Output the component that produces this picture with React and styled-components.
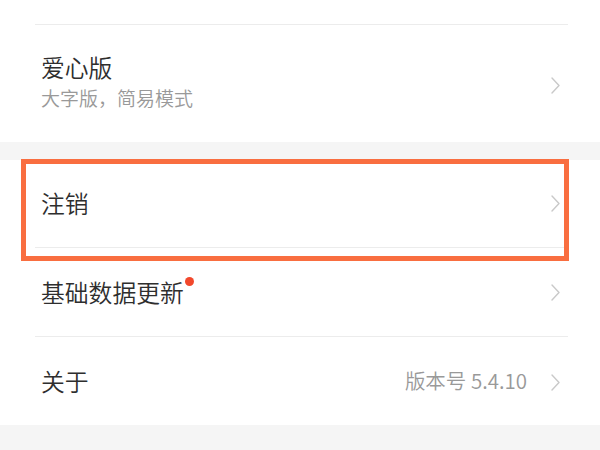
import React from "react";
import styled, { createGlobalStyle } from "styled-components";

const Global = createGlobalStyle`
  html, body { margin: 0; padding: 0; }
  body {
    background: #f5f5f5;
    font-family: "Noto Sans CJK SC", "Noto Sans", sans-serif;
    -webkit-font-smoothing: antialiased;
  }
`;

const Page = styled.div`
  position: relative;
  width: 600px;
  height: 450px;
  overflow: hidden;
  background: #f5f5f5;
`;

const Card = styled.section`
  background: #ffffff;
  display: flex;
  flex-direction: column;
  margin-bottom: ${(p) => p.$gap || 0}px;
`;

const Stub = styled.div`
  height: 24px;
`;

const Divider = styled.div`
  height: 1px;
  background: #ececec;
  margin: 0 32px 0 35px;
`;

const Row = styled.div`
  display: flex;
  align-items: center;
  height: ${(p) => p.$h}px;
  padding: 0 40px 0 41px;
  box-sizing: border-box;
`;

const TextCol = styled.div`
  flex: 1;
  display: flex;
  flex-direction: column;
  margin-top: ${(p) => p.$offset || 0}px;
`;

const Title = styled.div`
  position: relative;
  display: inline-block;
  align-self: flex-start;
  font-size: 23.8px;
  font-weight: 350;
  line-height: 30px;
  color: #2e2e2e;
`;

const Sub = styled.div`
  font-size: 19px;
  font-weight: 350;
  line-height: 26px;
  color: #999999;
  margin-top: 3px;
`;

const Dot = styled.span`
  position: absolute;
  right: -10px;
  top: 0px;
  width: 9px;
  height: 9px;
  border-radius: 50%;
  background: #f2482c;
`;

const Value = styled.div`
  font-size: 20.5px;
  font-weight: 350;
  color: #999999;
  margin-right: 24px;
  margin-top: -3px;
`;

const ChevronBox = styled.svg`
  flex: none;
  width: 9px;
  height: 17px;
  margin-top: ${(p) => p.$offset || 0}px;
`;

const Highlight = styled.div`
  position: absolute;
  left: 21px;
  top: 159px;
  width: 548px;
  height: 102px;
  box-sizing: border-box;
  border: 5px solid #f96e40;
  pointer-events: none;
`;

const Chevron = ({ offset }) => (
  <ChevronBox viewBox="0 0 9 17" $offset={offset}>
    <polyline
      points="1,1 8,8.5 1,16"
      fill="none"
      stroke="#c9c9c9"
      strokeWidth="1.4"
      strokeLinecap="round"
      strokeLinejoin="round"
    />
  </ChevronBox>
);

export default function App() {
  return (
    <>
      <Global />
      <Page>
        <Card $gap={18}>
          <Stub />
          <Divider />
          <Row $h={117}>
            <TextCol $offset={-4}>
              <Title>爱心版</Title>
              <Sub>大字版，简易模式</Sub>
            </TextCol>
            <Chevron offset={4} />
          </Row>
        </Card>
        <Card>
          <Row $h={87}>
            <TextCol $offset={-1}>
              <Title>注销</Title>
            </TextCol>
            <Chevron />
          </Row>
          <Divider />
          <Row $h={88}>
            <TextCol $offset={-1}>
              <Title>
                基础数据更新
                <Dot />
              </Title>
            </TextCol>
            <Chevron />
          </Row>
          <Divider />
          <Row $h={88}>
            <TextCol>
              <Title>关于</Title>
            </TextCol>
            <Value>版本号 5.4.10</Value>
            <Chevron offset={2} />
          </Row>
        </Card>
        <Highlight />
      </Page>
    </>
  );
}
